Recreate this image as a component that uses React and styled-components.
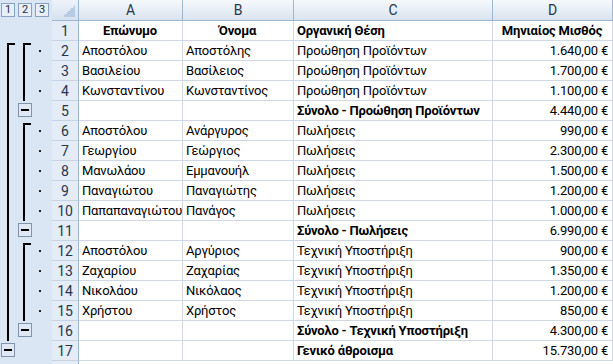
import styled, { createGlobalStyle, css } from "styled-components";

const GlobalStyle = createGlobalStyle`
  html, body {
    margin: 0;
    padding: 0;
    background: #ffffff;
  }
  * {
    box-sizing: border-box;
  }
`;

const rows = [
  { n: 1, a: "Επώνυμο", b: "Όνομα", c: "Οργανική Θέση", d: "Μηνιαίος Μισθός", head: true },
  { n: 2, a: "Αποστόλου", b: "Αποστόλης", c: "Προώθηση Προϊόντων", d: "1.640,00 €" },
  { n: 3, a: "Βασιλείου", b: "Βασίλειος", c: "Προώθηση Προϊόντων", d: "1.700,00 €" },
  { n: 4, a: "Κωνσταντίνου", b: "Κωνσταντίνος", c: "Προώθηση Προϊόντων", d: "1.100,00 €" },
  { n: 5, a: "", b: "", c: "Σύνολο - Προώθηση Προϊόντων", d: "4.440,00 €", total: true },
  { n: 6, a: "Αποστόλου", b: "Ανάργυρος", c: "Πωλήσεις", d: "990,00 €" },
  { n: 7, a: "Γεωργίου", b: "Γεώργιος", c: "Πωλήσεις", d: "2.300,00 €" },
  { n: 8, a: "Μανωλάου", b: "Εμμανουήλ", c: "Πωλήσεις", d: "1.500,00 €" },
  { n: 9, a: "Παναγιώτου", b: "Παναγιώτης", c: "Πωλήσεις", d: "1.200,00 €" },
  { n: 10, a: "Παπαπαναγιώτου", b: "Πανάγος", c: "Πωλήσεις", d: "1.000,00 €" },
  { n: 11, a: "", b: "", c: "Σύνολο - Πωλήσεις", d: "6.990,00 €", total: true },
  { n: 12, a: "Αποστόλου", b: "Αργύριος", c: "Τεχνική Υποστήριξη", d: "900,00 €" },
  { n: 13, a: "Ζαχαρίου", b: "Ζαχαρίας", c: "Τεχνική Υποστήριξη", d: "1.350,00 €" },
  { n: 14, a: "Νικολάου", b: "Νικόλαος", c: "Τεχνική Υποστήριξη", d: "1.200,00 €" },
  { n: 15, a: "Χρήστου", b: "Χρήστος", c: "Τεχνική Υποστήριξη", d: "850,00 €" },
  { n: 16, a: "", b: "", c: "Σύνολο - Τεχνική Υποστήριξη", d: "4.300,00 €", total: true },
  { n: 17, a: "", b: "", c: "Γενικό άθροισμα", d: "15.730,00 €", total: true },
];

// outline marks per row: level 1 and level 2 brackets, level 3 dots
const level1 = (n) => (n === 17 ? "button" : n === 2 ? "hook" : n > 2 && n < 17 ? "line" : null);
const level2 = (n) => {
  if ([5, 11, 16].includes(n)) return "button";
  if ([2, 6, 12].includes(n)) return "hook";
  if ([3, 4, 7, 8, 9, 10, 13, 14, 15].includes(n)) return "line";
  return null;
};
const isDetail = (n) => [2, 3, 4, 6, 7, 8, 9, 10, 12, 13, 14, 15].includes(n);

const Frame = styled.div`
  display: flex;
  width: 613px;
  height: 364px;
  overflow: hidden;
  font-family: Roboto, "Noto Sans", sans-serif;
  font-size: 13px;
  letter-spacing: -0.2px;
  color: #000;
`;

const OutlinePane = styled.div`
  display: grid;
  grid-template-columns: 17px 17px 18px;
  grid-template-rows: 21px repeat(17, 20px) 1fr;
  width: 52px;
  background: #dbe6f4;
  letter-spacing: 0;
`;

const LevelButton = styled.div`
  margin: 3px 0 0 1px;
  width: 14px;
  height: 14px;
  border: 1px solid #8aa2c1;
  background: #e8eff8;
  color: #1f2f45;
  font-size: 11px;
  line-height: 12px;
  text-align: center;
`;

const Mark = styled.div`
  position: relative;
  ${(p) =>
    p.$kind === "line" &&
    css`
      &::before {
        content: "";
        position: absolute;
        left: ${p.$x}px;
        top: 0;
        bottom: 0;
        width: 2px;
        background: #000;
      }
    `}
  ${(p) =>
    p.$kind === "hook" &&
    css`
      &::before {
        content: "";
        position: absolute;
        left: ${p.$x}px;
        top: 2px;
        bottom: 0;
        width: 6px;
        border-left: 2px solid #000;
        border-top: 2px solid #000;
      }
    `}
`;

const MinusButton = styled.div`
  margin: 2px 0 0 ${(p) => p.$x}px;
  width: 14px;
  height: 14px;
  border: 1px solid #7f93ad;
  background: #dfe8f4;
  display: flex;
  align-items: center;
  justify-content: center;
  &::after {
    content: "";
    width: 8px;
    height: 2px;
    background: #000;
  }
`;

const Dot = styled.div`
  display: flex;
  align-items: center;
  padding-left: 5px;
  &::after {
    content: "";
    width: 2px;
    height: 2px;
    background: #222;
  }
`;

const Sheet = styled.div`
  display: grid;
  grid-template-columns: 27px 104px 111px 199px 1fr;
  grid-template-rows: 21px repeat(17, 20px) 1fr;
  flex: 1;
`;

const Corner = styled.div`
  display: flex;
  align-items: flex-end;
  justify-content: flex-end;
  padding: 0 3px 3px 0;
  background: linear-gradient(#eef3fa, #d6e1ef);
  border-right: 1px solid #9eb6ce;
  border-bottom: 1px solid #9eb6ce;
  &::after {
    content: "";
    width: 12px;
    height: 12px;
    background: linear-gradient(135deg, transparent 50%, #b9cbe2 50%);
  }
`;

const ColHead = styled.div`
  display: flex;
  align-items: center;
  justify-content: center;
  background: linear-gradient(#f6f9fc 0%, #e9eff7 45%, #d9e3ef 100%);
  border-right: 1px solid #9eb6ce;
  border-bottom: 1px solid #9eb6ce;
  color: #27364a;
  font-size: 14px;
  letter-spacing: 0;
`;

const RowHead = styled.div`
  display: flex;
  align-items: center;
  justify-content: center;
  background: #e4ecf7;
  border-right: 1px solid #9eb6ce;
  border-bottom: 1px solid #c5d3e4;
  color: #27364a;
  font-size: 14px;
  letter-spacing: 0;
`;

const Cell = styled.div`
  display: flex;
  align-items: center;
  padding: 0 4px 0 3px;
  border-right: 1px solid #d0d7e5;
  border-bottom: 1px solid #d0d7e5;
  white-space: nowrap;
  overflow: hidden;
  justify-content: ${(p) =>
    p.$align === "center" ? "center" : p.$align === "right" ? "flex-end" : "flex-start"};
  font-weight: ${(p) => (p.$bold ? 700 : 400)};
`;

const Filler = styled.div`
  background: ${(p) => (p.$head ? "#e4ecf7" : "transparent")};
  border-right: ${(p) => (p.$head ? "1px solid #9eb6ce" : "1px solid #d0d7e5")};
`;

function OutlineRow({ n }) {
  const l1 = level1(n);
  const l2 = level2(n);
  return (
    <>
      {l1 === "button" ? <MinusButton $x={1} /> : <Mark $kind={l1} $x={7} />}
      {l2 === "button" ? <MinusButton $x={1} /> : <Mark $kind={l2} $x={6} />}
      {isDetail(n) ? <Dot /> : <div />}
    </>
  );
}

function Row({ r }) {
  return (
    <>
      <RowHead>{r.n}</RowHead>
      <Cell $align={r.head ? "center" : "left"} $bold={r.head}>
        {r.a}
      </Cell>
      <Cell $align={r.head ? "center" : "left"} $bold={r.head}>
        {r.b}
      </Cell>
      <Cell $bold={r.head || r.total}>{r.c}</Cell>
      <Cell $align={r.head ? "center" : "right"} $bold={r.head}>
        {r.d}
      </Cell>
    </>
  );
}

export default function App() {
  return (
    <>
      <GlobalStyle />
      <Frame>
        <OutlinePane>
          <LevelButton>1</LevelButton>
          <LevelButton>2</LevelButton>
          <LevelButton>3</LevelButton>
          {rows.map((r) => (
            <OutlineRow key={r.n} n={r.n} />
          ))}
        </OutlinePane>
        <Sheet>
          <Corner />
          <ColHead>A</ColHead>
          <ColHead>B</ColHead>
          <ColHead>C</ColHead>
          <ColHead>D</ColHead>
          {rows.map((r) => (
            <Row key={r.n} r={r} />
          ))}
          <Filler $head />
        </Sheet>
      </Frame>
    </>
  );
}
